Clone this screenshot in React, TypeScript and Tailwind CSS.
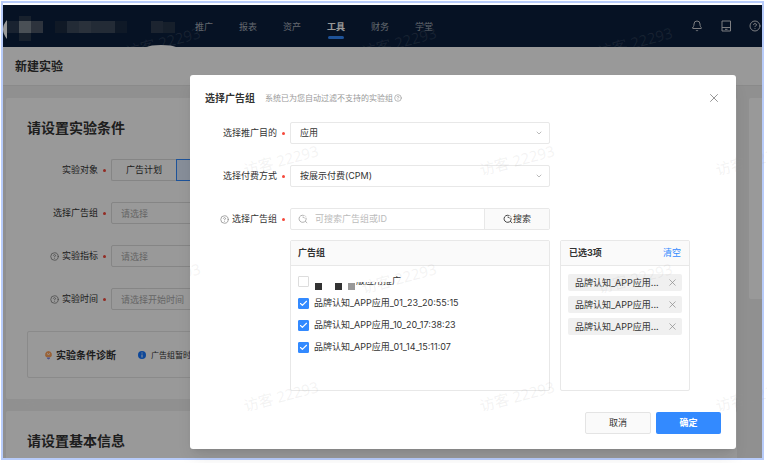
import { useState } from "react";
import type { ReactNode } from "react";
import { Bell, Check, ChevronDown, CircleHelp, X } from "lucide-react";

const NAV_ITEMS = ["推广", "报表", "资产", "工具", "财务", "学堂"];

const AD_GROUPS = [
  "品牌认知_APP应用_01_23_20:55:15",
  "品牌认知_APP应用_10_20_17:38:23",
  "品牌认知_APP应用_01_14_15:11:07",
];

const WATERMARKS = [0, 1, 2, 3].flatMap((row) =>
  [0, 1, 2, 3].map((col) => ({
    left: (row % 2 === 0 ? 123 : 5) + col * 236,
    top: 30 + row * 118,
  }))
);

function Required() {
  return <span className="mx-[5px] size-[3px] shrink-0 rounded-full bg-[#f5483b]" />;
}

function SearchIcon({ className }: { className: string }) {
  return (
    <svg viewBox="0 0 24 24" fill="none" stroke="currentColor" strokeWidth="2.2" className={className}>
      <path d="M14 3.500A8.500 8.500 0 1 0 19.200 9M17 17l5 4.500M11 7.500q4-.5 5 3M16 3.500l2.500 2.500" />
    </svg>
  );
}

function BrandArea() {
  return (
    <svg viewBox="0 0 184 42" className="h-[42px] w-[184px] shrink-0" aria-hidden="true">
      <path d="M4 15Q-4 24 4 34z" fill="#fff" />
      <path d="M144 42q3-2 14-2t15 2z" fill="#fff" />
      <path d="M4 16h12v12H4z" fill="#2a3a50" />
      <path d="M16 11h12v5H16zM16 28h12v8H16z" fill="#28374c" />
      <path d="M16 16h12v12H16z" fill="#7c8590" />
      <path d="M28 16h12v12H28z" fill="#4b5666" />
      <path d="M52 16h12v12H52z" fill="#1c2b40" />
      <path d="M64 16h48v12H64z" fill="#3b485a" />
      <path d="M76 16h12v12H76z" fill="#465263" />
      <path d="M112 16h12v12H112z" fill="#1a2a42" />
      <path d="M148 16h12v12H148z" fill="#303d50" />
      <path d="M160 17h12v11H160z" fill="#253449" />
    </svg>
  );
}

function TopBar() {
  return (
    <header className="flex h-[42px] items-center overflow-hidden bg-[#0b1f3d]">
      <BrandArea />
      <nav className="ml-2 flex flex-1 gap-[26px] pt-0.5">
        {NAV_ITEMS.map((item) => (
          <a
            key={item}
            href="#"
            className={
              item === "工具"
                ? "relative whitespace-nowrap font-bold text-white"
                : "whitespace-nowrap text-[#a5adb8]"
            }
          >
            {item}
            {item === "工具" && (
              <span className="absolute inset-x-px top-[15px] h-[3px] rounded-xs bg-[#338aff]" />
            )}
          </a>
        ))}
      </nav>
      <div className="mr-px flex shrink-0 gap-[17px] text-[#d0d3d8]">
        <button type="button" aria-label="通知">
          <Bell className="size-3" />
        </button>
        <button type="button" aria-label="设备">
          <svg viewBox="0 0 12 12" fill="none" stroke="currentColor" className="size-3">
            <path d="M2 1h8.500v10H2zM2 7.500h8.500M5 9.300h2.500" />
          </svg>
        </button>
        <button type="button" aria-label="帮助">
          <CircleHelp className="size-3" />
        </button>
      </div>
    </header>
  );
}

function PageRow({ label, help, htmlFor, children }: { label: string; help?: boolean; htmlFor?: string; children: ReactNode }) {
  return (
    <div className="flex h-[22px] items-center">
      <div className="flex w-[84px] shrink-0 items-center justify-end">
        {help && <CircleHelp className="mr-[3px] size-[9px] text-[#777]" />}
        <label htmlFor={htmlFor} className="whitespace-nowrap">{label}</label>
        <Required />
      </div>
      {children}
    </div>
  );
}

function ExperimentPage() {
  const input =
    "h-[22px] w-[300px] rounded-xs border border-[#dedede] bg-white px-[9px] placeholder:text-[#aaa]";
  return (
    <div className="flex min-w-0 flex-col bg-[#f0f0f1] [grid-area:1/1]">
      <TopBar />
      <h1 className="h-[39px] border-b border-[#e6e6e6] bg-white pl-3 text-[12px] leading-10 font-bold">
        新建实验
      </h1>
      <div className="flex flex-1 gap-3 pt-3 pl-[3px]">
        <main className="flex min-w-0 flex-1 flex-col gap-3">
          <section className="rounded-xs bg-white px-[21px] pt-5 pb-[21px]">
            <h2 className="mb-[21px] text-[14px] leading-5 font-bold">请设置实验条件</h2>
            <div className="flex flex-col gap-[21px] overflow-hidden">
              <PageRow label="实验对象">
                <button type="button" className="h-[22px] w-[65px] shrink-0 rounded-l-xs border border-r-0 border-[#dedede]">
                  广告计划
                </button>
                <button type="button" className="h-[22px] w-[65px] shrink-0 border border-[#338aff] bg-[#e2edff] text-[#338aff]">
                  广告组
                </button>
              </PageRow>
              <PageRow label="选择广告组" htmlFor="page-group">
                <input id="page-group" className={input} placeholder="请选择" />
              </PageRow>
              <PageRow label="实验指标" htmlFor="page-metric" help>
                <input id="page-metric" className={input} placeholder="请选择" />
              </PageRow>
              <PageRow label="实验时间" htmlFor="page-time" help>
                <input id="page-time" className={input} placeholder="请选择开始时间" />
              </PageRow>
            </div>
            <div className="mt-[21px] flex h-[47px] items-center overflow-hidden rounded-xs border border-[#e6e6e6] pl-4 whitespace-nowrap">
              <svg viewBox="0 0 9 10" className="h-2.5 w-[9px] shrink-0">
                <path d="M4.500 1a3.500 3.500 0 0 1 2 6.300h-4A3.500 3.500 0 0 1 4.500 1z" fill="#ffa45c" />
                <path d="M3 3.500q1.500 2 3 0" stroke="#fff" fill="none" />
                <path d="M3 7.500h3v1L4.500 9.600 3 8.500z" fill="#7f86e8" />
              </svg>
              <span className="ml-[3px] text-[10px] font-bold">实验条件诊断</span>
              <svg viewBox="0 0 8 8" className="ml-[22px] size-2 shrink-0">
                <circle cx="4" cy="4" r="4" fill="#1677ff" />
                <path d="M4 1.500v1M4 3.500v3" stroke="#fff" />
              </svg>
              <span className="ml-[5px] text-[8px]">广告组暂时无法进行诊断</span>
            </div>
          </section>
          <section className="flex-1 rounded-t-xs bg-white px-[21px] pt-5">
            <h2 className="text-[14px] leading-5 font-bold">请设置基本信息</h2>
          </section>
        </main>
        <aside className="h-[201px] w-[13px] rounded-l-xs bg-white" />
      </div>
    </div>
  );
}

function ModalRow({ label, htmlFor, help, children }: { label: string; htmlFor: string; help?: boolean; children: ReactNode }) {
  return (
    <div className="flex items-center">
      <div className="flex w-[100px] shrink-0 items-center justify-end">
        {help && <CircleHelp className="mr-[3px] size-[9px] text-[#888]" />}
        <label htmlFor={htmlFor} className="whitespace-nowrap">{label}</label>
        <Required />
      </div>
      {children}
    </div>
  );
}

function SelectBox({ id, value }: { id: string; value: string }) {
  return (
    <div className="relative min-w-0 flex-1">
      <select id={id} className="h-[22px] w-full appearance-none rounded-xs border border-[#e8e8e8] bg-white px-[9px]">
        <option>{value}</option>
      </select>
      <ChevronDown className="pointer-events-none absolute top-[7px] right-[7px] size-2 text-[#999]" />
    </div>
  );
}

function AdGroupDialog() {
  const [selected, setSelected] = useState(AD_GROUPS);

  const toggle = (name: string) =>
    setSelected(
      selected.includes(name) ? selected.filter((s) => s !== name) : AD_GROUPS.filter((s) => s === name || selected.includes(s))
    );

  return (
    <div className="z-10 bg-black/40 pt-[70px] pr-[26px] pb-[9px] pl-[187px] [grid-area:1/1]">
      <div role="dialog" aria-labelledby="dialog-title" className="rounded-[3px] bg-white pb-[15px] shadow-lg">
        <div className="flex items-center pt-[15px] pr-[15px] pl-[15px] leading-4">
          <h2 id="dialog-title" className="text-[10px] font-bold">选择广告组</h2>
          <span className="ml-2.5 text-[8px] text-[#999]">系统已为您自动过滤不支持的实验组</span>
          <CircleHelp className="ml-px size-2 text-[#999]" />
          <button type="button" aria-label="关闭" className="ml-auto text-[#888]">
            <X className="size-[14px] stroke-[1.5]" />
          </button>
        </div>

        <div className="mt-4 flex flex-col gap-[21px] pr-[186px]">
          <ModalRow label="选择推广目的" htmlFor="goal">
            <SelectBox id="goal" value="应用" />
          </ModalRow>
          <ModalRow label="选择付费方式" htmlFor="billing">
            <SelectBox id="billing" value="按展示付费(CPM)" />
          </ModalRow>
          <ModalRow label="选择广告组" htmlFor="keyword" help>
            <div className="flex h-[22px] min-w-0 flex-1 rounded-xs border border-[#e8e8e8]">
              <SearchIcon className="my-auto ml-[7px] size-2.5 shrink-0 text-[#aaa]" />
              <input id="keyword" className="min-w-0 flex-1 px-[7px] placeholder:text-[#bbb]" placeholder="可搜索广告组或ID" />
              <button type="button" className="flex w-[65px] items-center justify-center border-l border-[#e8e8e8] bg-[#fafafa]">
                <SearchIcon className="size-2.5" />
                搜索
              </button>
            </div>
          </ModalRow>
        </div>

        <div className="mt-2.5 flex gap-2.5 pr-[46px] pl-[100px]">
          <section className="h-[151px] flex-1 rounded-xs border border-[#e8e8e8]">
            <h3 className="h-[25px] border-b border-[#e8e8e8] bg-[#fafafa] pl-[7px] leading-6 font-bold">广告组</h3>
            <ul className="pt-1 pl-[7px]">
              <li className="relative flex h-[22px] items-center">
                <input id="group-masked" type="checkbox" className="size-[11px] appearance-none rounded-[1px] border border-[#ddd]" />
                <label htmlFor="group-masked" className="ml-[47px]">版应用推广</label>
                {/* redacted part of the name */}
                <svg viewBox="0 0 90 22" className="absolute left-4 top-0 h-[22px] w-[90px]" aria-hidden="true">
                  <path d="M39 0h39v12H39zM39 15h51v7H39z" fill="#fff" />
                  <path d="M1 13h7v7H1zM21 13h7v7h-7z" fill="#333" />
                  <path d="M34 13h7v7h-7z" fill="#999" />
                </svg>
              </li>
              {AD_GROUPS.map((name) => (
                <li key={name}>
                  <label className="flex h-[22px] items-center">
                    <span className="grid size-[11px] place-items-center">
                      <input
                        type="checkbox"
                        checked={selected.includes(name)}
                        onChange={() => toggle(name)}
                        className="size-[11px] appearance-none rounded-[1px] border border-[#ddd] [grid-area:1/1] checked:border-[#338aff] checked:bg-[#338aff]"
                      />
                      <Check className="pointer-events-none size-[9px] stroke-3 text-white [grid-area:1/1]" />
                    </span>
                    <span className="ml-[5px] whitespace-nowrap">{name}</span>
                  </label>
                </li>
              ))}
            </ul>
          </section>

          <section className="h-[151px] w-[130px] rounded-xs border border-[#e8e8e8]">
            <div className="flex h-[25px] items-center justify-between border-b border-[#e8e8e8] bg-[#fafafa] px-2">
              <h3 className="font-bold">已选{selected.length}项</h3>
              <button type="button" className="text-[#338aff]" onClick={() => setSelected([])}>清空</button>
            </div>
            <ul className="flex flex-col gap-[5px] px-[7px] pt-2">
              {selected.map((name) => (
                <li key={name} className="flex h-[17px] items-center justify-between rounded-xs bg-[#f0f0f0] pr-1 pl-[7px]">
                  <span className="whitespace-nowrap">{name.slice(0, 10)}...</span>
                  <button type="button" aria-label="移除" onClick={() => toggle(name)} className="text-[#888]">
                    <X className="size-[11px] stroke-[1.5]" />
                  </button>
                </li>
              ))}
            </ul>
          </section>
        </div>

        <div className="mt-[21px] flex justify-end gap-[5px] pr-[15px]">
          <button type="button" className="h-[22px] w-[66px] rounded-xs border border-[#e4e4e4] bg-[#fafafa]">取消</button>
          <button type="button" className="h-[22px] w-[65px] rounded-xs bg-[#338aff] font-bold text-white">确定</button>
        </div>
      </div>
    </div>
  );
}

export default function App() {
  return (
    <div
      lang="zh-CN"
      className="relative flex min-h-screen overflow-hidden bg-white pt-px pr-[3px] pb-[3px] pl-px font-[Inter,'Noto_Sans_CJK_SC',sans-serif] text-[9px] leading-3 text-[#333]"
    >
      <div className="grid min-w-0 flex-1 grid-cols-1 border-2 border-[#b8ccfa] pt-0.5">
        <ExperimentPage />
        <AdGroupDialog />
      </div>
      <div className="pointer-events-none absolute inset-0 z-20 overflow-hidden" aria-hidden="true">
        {WATERMARKS.map((mark) => (
          <span
            key={`${mark.left}-${mark.top}`}
            style={mark}
            className="absolute w-20 -rotate-15 text-center font-['Open_Sans','Noto_Sans_CJK_SC',sans-serif] text-[15px] leading-6 whitespace-nowrap text-[#999]/12"
          >
            访客 22293
          </span>
        ))}
      </div>
    </div>
  );
}
